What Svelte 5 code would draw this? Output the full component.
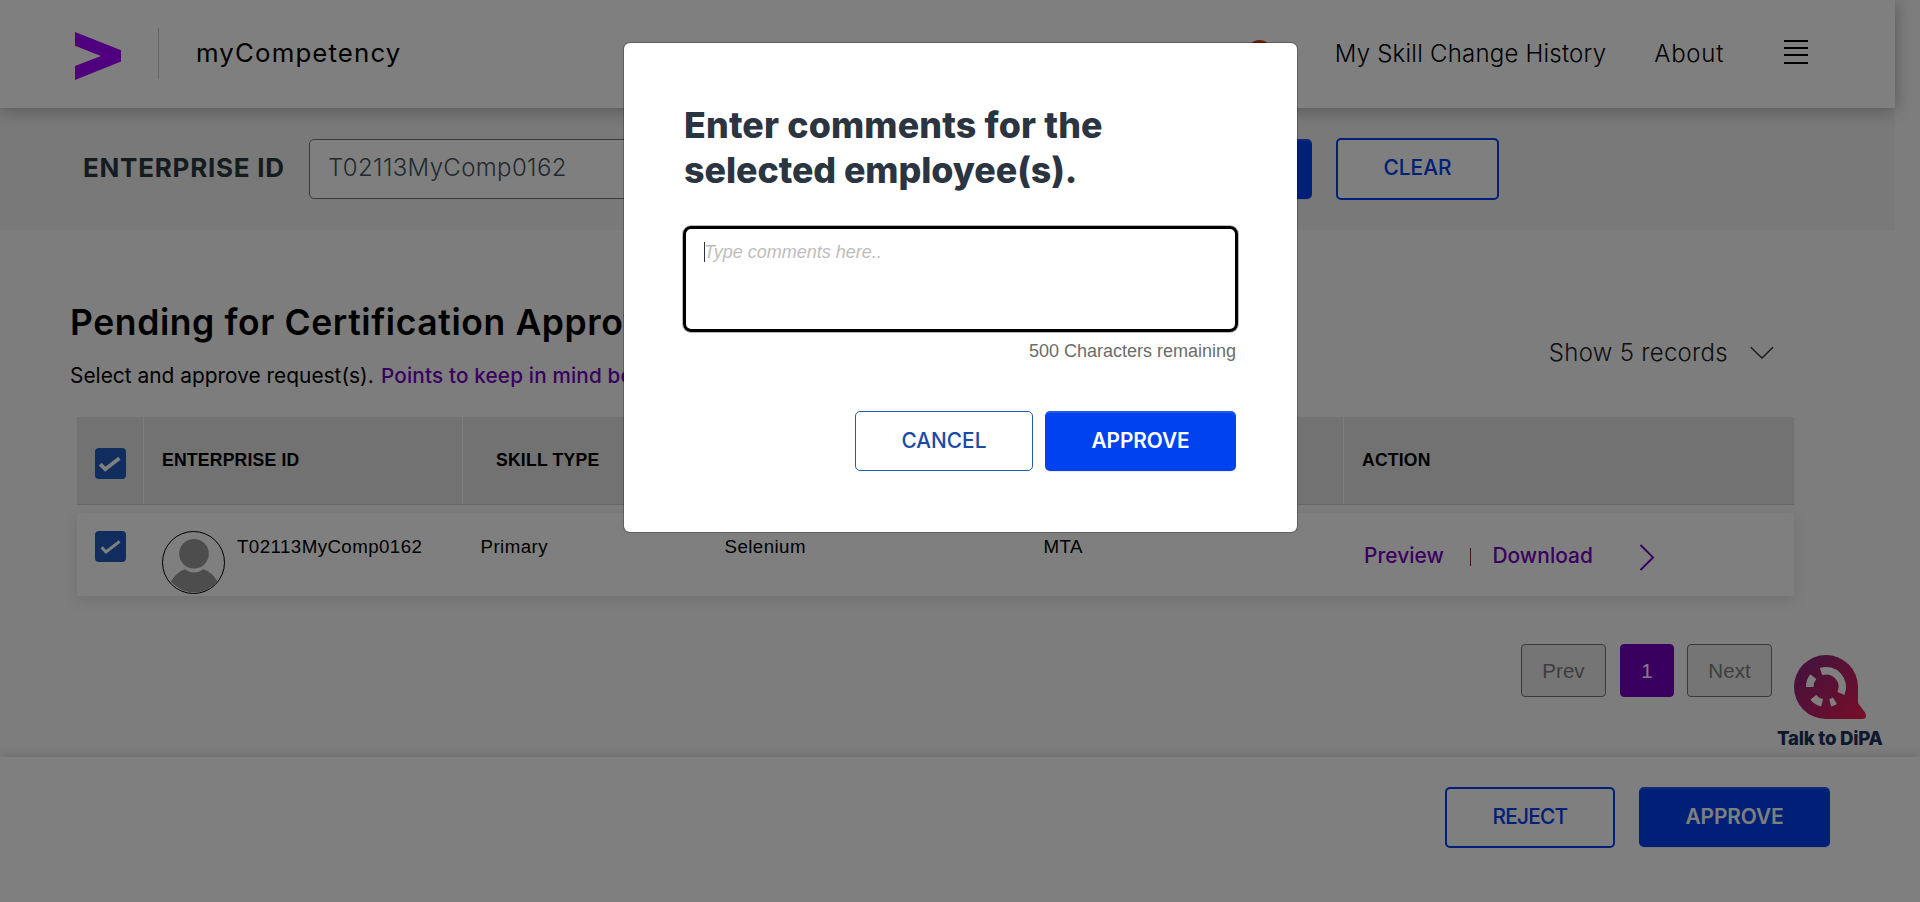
<script>
  const row = { id: 'T02113MyComp0162', type: 'Primary', skill: 'Selenium', cert: 'MTA' };
  let comments = $state('');
  let remaining = $derived(500 - comments.length);
</script>

{#snippet check(d, w)}
  <span class="check"><svg viewBox="0 0 31 31" width="31" height="31"><path {d} fill="none" stroke="#fff" stroke-width={w} /></svg></span>
{/snippet}

<div class="page">
  <header>
    <svg class="logo" width="46" height="48" viewBox="0 0 46 48"><path d="M0 0 46 18.2V29.6L0 48V34L26 24 0 13.8Z" fill="#a100ff" /></svg>
    <span class="divider"></span>
    <span class="brand">myCompetency</span>
    <nav>
      <span class="bell"></span>
      <span class="history">My Skill Change History</span>
      <span class="about">About</span>
      <span class="menu"><i></i><i></i><i></i><i></i></span>
    </nav>
  </header>

  <section class="search">
    <span class="label">ENTERPRISE ID</span>
    <div class="field">T02113MyComp0162</div>
    <div class="btn solid go"></div>
    <div class="btn line clear">CLEAR</div>
  </section>

  <main>
    <div class="toolbar">
      <div>
        <h1>Pending for Certification Approval</h1>
        <p><span class="sel">Select and approve request(s).</span><a>Points to keep in mind before approving</a></p>
      </div>
      <div class="records">
        <span>Show 5 records</span>
        <svg width="24" height="14" viewBox="0 0 24 14"><path d="M.8 1.2 12 12 23 1.2" fill="none" stroke="#333" stroke-width="1.4" /></svg>
      </div>
    </div>

    <div class="grid thead">
      <div class="cell sel-all">{@render check('M5.2 16.2 10.2 21.2 24.4 10.2', 3.8)}</div>
      <div class="cell">ENTERPRISE ID</div>
      <div class="cell type">SKILL TYPE</div>
      <div class="cell"></div>
      <div class="cell"></div>
      <div class="cell">ACTION</div>
    </div>
    <div class="grid trow">
      <div class="pick">{@render check('M6.6 16.2 11 21 24.6 10.4', 3)}</div>
      <div class="person">
        <svg width="63" height="63" viewBox="0 0 63 63">
          <circle cx="31.5" cy="31.5" r="31" fill="#fff" stroke="#000" />
          <circle cx="32" cy="22.7" r="14.8" fill="#9a9a9a" />
          <path d="M8.9 50.5Q14.5 41 23 38.2 32 45 41.5 38.2 50 41 55.4 50.5 46 61.2 32 61.2 18 61.2 8.9 50.5Z" fill="#9a9a9a" />
        </svg>
        <span>{row.id}</span>
      </div>
      <div>{row.type}</div>
      <div>{row.skill}</div>
      <div>{row.cert}</div>
      <div class="actions">
        <span>Preview</span><b></b><span class="dl">Download</span>
        <svg width="16" height="27" viewBox="0 0 16 27"><path d="M1.5 1 14 13.4 1.5 26" fill="none" stroke="#7500c0" stroke-width="2" /></svg>
      </div>
    </div>

    <div class="pager">
      <span class="page-btn">Prev</span>
      <span class="page-btn current">1</span>
      <span class="page-btn">Next</span>
    </div>
  </main>

  <footer>
    <div class="btn line reject">REJECT</div>
    <div class="btn solid">APPROVE</div>
  </footer>

  <div class="dipa">
    <svg width="72" height="64" viewBox="0 0 72 64">
      <defs>
        <linearGradient id="dipa" x1="0" y1="0.1" x2="1" y2="0.9"><stop offset="0" stop-color="#83257c" /><stop offset="1" stop-color="#ea1d52" /></linearGradient>
      </defs>
      <path d="M32 0A32 32 0 0 1 64 32V48L71 57.5Q74 64 68 64H32A32 32 0 0 1 32 0Z" fill="url(#dipa)" />
      <path d="M27 16.5A16.3 16.3 0 0 1 47 38.4M15.7 32A16.3 16.3 0 0 1 19.3 21.7M19.3 42.3A16.3 16.3 0 0 0 28.1 47.8M36.2 47.7A16.3 16.3 0 0 0 40.9 45.7" fill="none" stroke="#fff" stroke-width="7.6" />
    </svg>
    <span>Talk to DiPA</span>
  </div>

  <div class="backdrop">
    <div class="modal">
      <h2><span>Enter comments for the</span><br />selected employee(s).</h2>
      <div class="comments"><span class="caret"></span>Type comments here..</div>
      <div class="count">{remaining} Characters remaining</div>
      <div class="modal-actions">
        <div class="btn cancel">CANCEL</div>
        <div class="btn solid confirm">APPROVE</div>
      </div>
    </div>
  </div>
</div>

<style>
  :global(body) { margin: 0; background: #fafafa; }
  .page, .page :global(*) { box-sizing: border-box; }
  .page {
    position: relative; width: 1920px; height: 902px; overflow: hidden;
    display: flex; flex-direction: column; background: #fafafa; color: #000;
    font-family: Inter, sans-serif; white-space: nowrap;
  }
  svg { display: block; flex: none; }

  header {
    width: 1895px; height: 108px; flex: none; background: #fff; z-index: 1;
    display: flex; align-items: flex-start; padding: 28px 87px 0 75px;
    box-shadow: 0 2px 16px rgba(0, 0, 0, 0.3);
  }
  .logo { margin-top: 4px; }
  .divider { width: 1px; height: 51px; margin-left: 37px; background: #ccc; }
  .brand { margin: 10px 0 0 37px; font-size: 25.8px; line-height: 30px; letter-spacing: 1.15px; font-weight: 400; }
  nav { margin-left: auto; display: flex; align-items: flex-start; font-size: 24px; line-height: 30px; font-weight: 300; }
  .bell { width: 25px; height: 25px; border-radius: 50%; background: #e03c0a; margin: 12px 63px 0 0; }
  .history { margin: 11px 48px 0 0; letter-spacing: 0.22px; }
  .about { margin: 11px 60px 0 0; letter-spacing: 0.7px; }
  .menu { display: flex; flex-direction: column; gap: 5.4px; margin-top: 11.5px; }
  .menu i { width: 24px; height: 2px; background: #000; }

  .search { width: 1895px; height: 122px; flex: none; background: #f2f2f2; display: flex; align-items: flex-start; padding: 30px 0 0 83px; }
  .label { width: 226px; line-height: 60px; font-size: 26px; font-weight: 650; letter-spacing: 0.75px; color: #2b3840; }
  .field {
    width: 760px; height: 60px; margin-top: 1px; padding-left: 18px; line-height: 56px;
    background: #fff; border: 1px solid #757575; border-radius: 5px;
    font-size: 24px; font-weight: 300; color: #46545e; letter-spacing: 0.36px;
  }
  .btn { height: 60px; border-radius: 5px; display: flex; align-items: center; justify-content: center; font-size: 20.8px; font-weight: 500; }
  .solid {
    width: 191px; background: #0041f0; color: #fff; font-weight: 600; letter-spacing: -0.05px;
    box-shadow: inset 0 2px 0 rgba(255, 255, 255, 0.13), 0 1px 1px rgba(0, 0, 0, 0.08);
  }
  .line { height: 62px; background: #fff; border: 2px solid #0041f0; color: #0041f0; }
  .go { margin: 1px 0 0 52px; }
  .clear { width: 163px; margin-left: 24px; padding-bottom: 3px; }

  main { height: 527px; flex: none; }
  .toolbar { height: 187px; display: flex; justify-content: space-between; padding: 72px 146px 0 70px; }
  h1 { margin: 0; font-size: 35.5px; line-height: 42px; font-weight: 600; letter-spacing: 0.6px; }
  p { margin: 19px 0 0; line-height: 26px; font-size: 20.9px; }
  .sel { display: inline-block; width: 311px; font-weight: 400; }
  a { font-size: 20.7px; font-weight: 500; letter-spacing: 0.16px; color: #7500c0; }
  .records { display: flex; align-items: flex-start; gap: 22px; margin-top: 36px; font-size: 24px; line-height: 30px; font-weight: 300; letter-spacing: 0.28px; color: #222; }
  .records svg { margin-top: 8px; }

  .grid { display: grid; grid-template-columns: 66px 319px 244px 319px 318px 451px; width: 1717px; margin-left: 77px; font-family: 'Liberation Sans', Arial, sans-serif; }
  .thead { height: 88px; background: #e4e4e4; border-bottom: 1px solid #cfcfcf; font-size: 17.6px; font-weight: 700; letter-spacing: 0.2px; }
  .cell { padding: 33px 0 0 18px; line-height: 20px; border-left: 1px solid #fcfcfc; }
  .cell:first-child, .cell:nth-child(4), .cell:nth-child(5) { border-left-color: transparent; }
  .cell.sel-all { padding: 31px 0 0 17px; }
  .cell.type { padding-left: 33px; }
  .check { display: block; width: 31px; height: 31px; border-radius: 4px; background: #205abc; }
  .trow { height: 83px; margin-top: 8px; background: #fff; box-shadow: 0 4px 14px rgba(0, 0, 0, 0.1); font-size: 18.7px; line-height: 20px; letter-spacing: 0.44px; }
  .trow > div { padding: 24px 0 0 18.5px; }
  .trow > .pick { padding: 18px 0 0 18px; }
  .trow > .person { padding: 18px 0 0 19px; display: flex; gap: 12px; }
  .person span { margin-top: 6px; }
  .trow > .actions { display: flex; align-items: flex-start; padding: 31px 0 0 21px; font-family: Inter, sans-serif; font-size: 20.9px; font-weight: 500; color: #7500c0; letter-spacing: 0.06px; line-height: 24px; }
  .actions b { width: 1.5px; height: 18px; margin: 4px 21px 0 26px; background: #8a2a1a; }
  .actions .dl { margin-right: 46px; }
  .actions svg { margin-top: 0; }

  .pager { display: flex; margin: 48px 0 0 1521px; font: 20.6px 'Liberation Sans', Arial, sans-serif; color: #7c7c7c; }
  .page-btn { width: 85px; height: 53px; padding-top: 1px; border: 1px solid #757575; border-radius: 4px; background: #ebebeb; display: flex; align-items: center; justify-content: center; }
  .current { width: 54px; margin: 0 13px 0 14px; background: #7500c0; border-color: #7500c0; color: #fff; }

  footer { height: 145px; flex: none; background: #fff; display: flex; gap: 24px; padding: 30px 0 0 1445px; box-shadow: 0 -1px 10px rgba(0, 0, 0, 0.16); }
  .reject { width: 170px; height: 61px; letter-spacing: -0.75px; padding-bottom: 2px; }
  footer .solid { padding-bottom: 1px; }

  .dipa { position: absolute; left: 1776px; top: 655px; width: 108px; }
  .dipa svg { margin-left: 18px; }
  .dipa span { display: block; margin: 7px 0 0 1px; font-size: 18.6px; line-height: 24px; font-weight: 800; letter-spacing: -0.25px; color: #20305c; }

  .backdrop { position: absolute; inset: 0; z-index: 2; background: rgba(0, 0, 0, 0.5); padding-top: 43px; }
  .modal { width: 673px; height: 489px; margin-left: 624px; padding: 60px 61px 0 60px; background: #fff; border-radius: 6px; box-shadow: 0 0 0 1px rgba(0, 0, 0, 0.25); }
  h2 { margin: 0; font-size: 35.8px; line-height: 45px; font-weight: 800; letter-spacing: -0.06px; color: #2b3541; }
  h2 span { letter-spacing: 0.16px; }
  .comments {
    position: relative; width: 555px; height: 106px; margin: 33px 0 0 -1px; padding: 13px 0 0 18px;
    border: 3px solid #000; border-radius: 8px; box-shadow: 0 0 0 1px #b9b9b9;
    font: italic 18px/20px 'Liberation Sans', Arial, sans-serif; color: #bdbdbd;
  }
  .caret { position: absolute; left: 18px; top: 13px; width: 1px; height: 20px; background: #2b3541; }
  .count { margin-top: 7px; text-align: right; font: 18px/24px 'Liberation Sans', Arial, sans-serif; color: #6c6c6c; }
  .modal-actions { display: flex; justify-content: flex-end; gap: 12px; margin-top: 48px; }
  .cancel { width: 178px; border: 1px solid #1f5bb8; color: #1c49a6; padding-bottom: 1px; }
  .confirm { padding-bottom: 1px; }
</style>
